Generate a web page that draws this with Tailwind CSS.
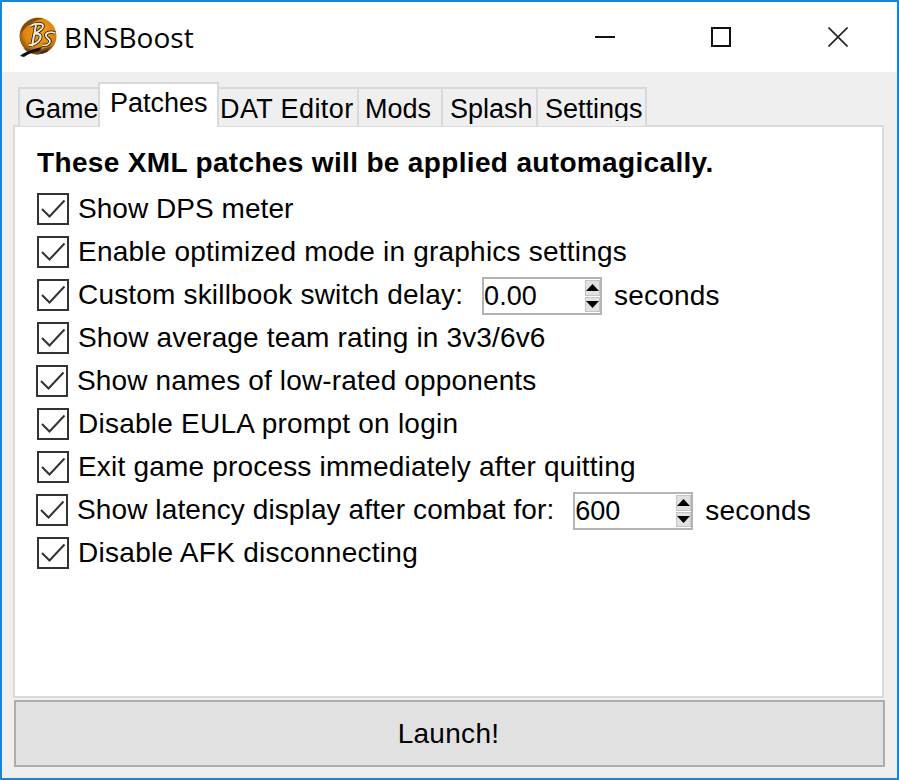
<!DOCTYPE html>
<html lang="en">
<head>
  <meta charset="UTF-8">
  <title>BNSBoost</title>
  <script src="https://cdn.jsdelivr.net/npm/@tailwindcss/browser@4"></script>
</head>
<body class="w-[899px] h-[780px] overflow-hidden bg-[#efefef]">
  <div class="w-[899px] h-[780px] border-2 border-[#1a84d9] flex flex-col font-['Liberation_Sans',Arial,sans-serif] text-[28px] text-black">

    <!-- title bar -->
    <div class="h-[70px] bg-white flex items-center shrink-0">
      <svg class="ml-[16px] w-[40px] h-[40px]" viewBox="0 0 40 40">
        <defs>
          <radialGradient id="disc" cx="0.55" cy="0.4" r="0.65">
            <stop offset="0" stop-color="#f4a21c"/>
            <stop offset="0.65" stop-color="#dd8410"/>
            <stop offset="1" stop-color="#6e420c"/>
          </radialGradient>
        </defs>
        <circle cx="20" cy="19" r="18.5" fill="url(#disc)"/>
        <path d="M2 18a18 18 0 0 1 24-16c-8 0-18 6-24 16z" fill="#5c3c14" opacity="0.75"/>
        <path d="M5 31c9 3 20 2 29-2a18 18 0 0 1-29 2z" fill="#6b4210" opacity="0.8"/>
        <path d="M12 9c5-3 13-3 13 0s-5 6-9 8c5-1 8 1 6 5s-7 6-11 6M18 8l-4 21" fill="none" stroke="#2a1a08" stroke-width="3.6"/>
        <path d="M37 16c-5-2-10 0-9 3s5 3 4 6-5 4-8 3" fill="none" stroke="#2a1a08" stroke-width="3.4"/>
        <path d="M12 9c5-3 13-3 13 0s-5 6-9 8c5-1 8 1 6 5s-7 6-11 6M18 8l-4 21" fill="none" stroke="#f2ead8" stroke-width="2"/>
        <path d="M37 16c-5-2-10 0-9 3s5 3 4 6-5 4-8 3" fill="none" stroke="#f2ead8" stroke-width="1.8"/>
        <path d="M2 39c4-4 13-7 22-9l-3 4c-6 1-11 3-15 6z" fill="#111"/>
        <path d="M22 35l9-3-2 3-6 2z" fill="#333"/>
      </svg>
      <span class="ml-[6px] font-['Open_Sans',sans-serif] text-[28px] leading-none">BNSBoost</span>
      <div class="ml-auto flex items-center">
        <svg class="w-[20px] h-[20px] mr-[96px]" viewBox="0 0 20 20"><path d="M0 10h20" stroke="#111" stroke-width="2"/></svg>
        <svg class="w-[20px] h-[20px] mr-[97px]" viewBox="0 0 20 20"><rect x="1" y="1" width="18" height="18" fill="none" stroke="#111" stroke-width="2"/></svg>
        <svg class="w-[20px] h-[20px] mr-[49px]" viewBox="0 0 20 20"><path d="M0.5 0.5l19 19M19.5 0.5l-19 19" stroke="#222" stroke-width="1.6"/></svg>
      </div>
    </div>

    <!-- tabs -->
    <div class="h-[53px] flex items-end pl-[16px] shrink-0 relative z-10 text-[27px] leading-none whitespace-nowrap">
      <div class="w-[80px] h-[39px] -mb-px border-2 border-r-0 border-b-0 border-[#d9d9d9] bg-[#efefef] pl-[5px] pt-[7px]">Game</div>
      <div class="w-[121px] h-[45px] -mb-[2px] border-2 border-b-0 border-[#d9d9d9] bg-white pl-[10px] pt-[6px]">Patches</div>
      <div class="w-[140px] h-[39px] -mb-px border-t-2 border-r-2 border-[#d9d9d9] bg-[#efefef] pl-[1px] pt-[7px] tracking-[0.4px]">DAT Editor</div>
      <div class="w-[84px] h-[39px] -mb-px border-t-2 border-r-2 border-[#d9d9d9] bg-[#efefef] pl-[6px] pt-[7px]">Mods</div>
      <div class="w-[95px] h-[39px] -mb-px border-t-2 border-r-2 border-[#d9d9d9] bg-[#efefef] pl-[7px] pt-[7px]">Splash</div>
      <div class="w-[109px] h-[39px] -mb-px border-t-2 border-r-2 border-[#d9d9d9] bg-[#efefef] pl-[7px] pt-[7px]"><div class="h-[25px] overflow-hidden">Settings</div></div>
    </div>

    <!-- patches pane -->
    <div class="mx-[11px] w-[871px] h-[573px] bg-white border-2 border-[#dadada] pl-[22px] pt-[20px] shrink-0">
      <h1 class="font-bold text-[28px] leading-[31px] tracking-[0.34px]">These XML patches will be applied automagically.</h1>
      <div class="mt-[9px] flex flex-col">
        <div class="flex items-center h-[43px] gap-[9px]">
          <svg class="w-[32px] h-[32px]" viewBox="0 0 32 32"><rect x="1" y="1" width="30" height="30" fill="#fff" stroke="#333" stroke-width="2"/><path d="M5 16l7.5 7.500L27.500 7.500" fill="none" stroke="#333" stroke-width="2"/></svg>
          <span class="tracking-[0.05px]">Show DPS meter</span>
        </div>
        <div class="flex items-center h-[43px] gap-[9px]">
          <svg class="w-[32px] h-[32px]" viewBox="0 0 32 32"><rect x="1" y="1" width="30" height="30" fill="#fff" stroke="#333" stroke-width="2"/><path d="M5 16l7.5 7.500L27.500 7.500" fill="none" stroke="#333" stroke-width="2"/></svg>
          <span class="tracking-[0.21px]">Enable optimized mode in graphics settings</span>
        </div>
        <div class="flex items-center h-[43px] gap-[9px]">
          <svg class="w-[32px] h-[32px]" viewBox="0 0 32 32"><rect x="1" y="1" width="30" height="30" fill="#fff" stroke="#333" stroke-width="2"/><path d="M5 16l7.5 7.500L27.500 7.500" fill="none" stroke="#333" stroke-width="2"/></svg>
          <span class="tracking-[0.18px]">Custom skillbook switch delay:</span>
          <div class="ml-[10px] w-[120px] h-[38px] mt-[3px] border-2 border-[#b4b4b4] flex items-center justify-between text-[27px]">
            <span>0.00</span>
            <div class="w-[15px] h-[32px] flex flex-col gap-px">
              <div class="flex-1 bg-[#e1e1e1] border border-[#c4c4c4] flex items-center justify-center"><svg class="w-[13px] h-[7px]" viewBox="0 0 13 7"><path d="M6.5 0l6.5 7H0z" fill="#000"/></svg></div>
              <div class="flex-1 bg-[#e1e1e1] border border-[#c4c4c4] flex items-center justify-center"><svg class="w-[13px] h-[7px]" viewBox="0 0 13 7"><path d="M0 0h13L6.500 7z" fill="#000"/></svg></div>
            </div>
          </div>
          <span class="ml-[3px] mt-[3px] tracking-[0.2px]">seconds</span>
        </div>
        <div class="flex items-center h-[43px] gap-[9px]">
          <svg class="w-[32px] h-[32px]" viewBox="0 0 32 32"><rect x="1" y="1" width="30" height="30" fill="#fff" stroke="#333" stroke-width="2"/><path d="M5 16l7.5 7.500L27.500 7.500" fill="none" stroke="#333" stroke-width="2"/></svg>
          <span class="tracking-[0.15px]">Show average team rating in 3v3/6v6</span>
        </div>
        <div class="flex items-center h-[43px] gap-[9px] -ml-px">
          <svg class="w-[32px] h-[32px]" viewBox="0 0 32 32"><rect x="1" y="1" width="30" height="30" fill="#fff" stroke="#333" stroke-width="2"/><path d="M5 16l7.5 7.500L27.500 7.500" fill="none" stroke="#333" stroke-width="2"/></svg>
          <span class="tracking-[0.15px]">Show names of low-rated opponents</span>
        </div>
        <div class="flex items-center h-[43px] gap-[9px]">
          <svg class="w-[32px] h-[32px]" viewBox="0 0 32 32"><rect x="1" y="1" width="30" height="30" fill="#fff" stroke="#333" stroke-width="2"/><path d="M5 16l7.5 7.500L27.500 7.500" fill="none" stroke="#333" stroke-width="2"/></svg>
          <span class="tracking-[0.24px]">Disable EULA prompt on login</span>
        </div>
        <div class="flex items-center h-[43px] gap-[9px]">
          <svg class="w-[32px] h-[32px]" viewBox="0 0 32 32"><rect x="1" y="1" width="30" height="30" fill="#fff" stroke="#333" stroke-width="2"/><path d="M5 16l7.5 7.500L27.500 7.500" fill="none" stroke="#333" stroke-width="2"/></svg>
          <span class="tracking-[0.19px]">Exit game process immediately after quitting</span>
        </div>
        <div class="flex items-center h-[43px] gap-[9px] -ml-px">
          <svg class="w-[32px] h-[32px]" viewBox="0 0 32 32"><rect x="1" y="1" width="30" height="30" fill="#fff" stroke="#333" stroke-width="2"/><path d="M5 16l7.5 7.500L27.500 7.500" fill="none" stroke="#333" stroke-width="2"/></svg>
          <span class="tracking-[0.11px]">Show latency display after combat for:</span>
          <div class="ml-[10px] w-[120px] h-[38px] mt-[3px] border-2 border-[#b4b4b4] flex items-center justify-between text-[27px]">
            <span>600</span>
            <div class="w-[15px] h-[32px] flex flex-col gap-px">
              <div class="flex-1 bg-[#e1e1e1] border border-[#c4c4c4] flex items-center justify-center"><svg class="w-[13px] h-[7px]" viewBox="0 0 13 7"><path d="M6.5 0l6.5 7H0z" fill="#000"/></svg></div>
              <div class="flex-1 bg-[#e1e1e1] border border-[#c4c4c4] flex items-center justify-center"><svg class="w-[13px] h-[7px]" viewBox="0 0 13 7"><path d="M0 0h13L6.500 7z" fill="#000"/></svg></div>
            </div>
          </div>
          <span class="ml-[3px] mt-[3px] tracking-[0.2px]">seconds</span>
        </div>
        <div class="flex items-center h-[43px] gap-[9px]">
          <svg class="w-[32px] h-[32px]" viewBox="0 0 32 32"><rect x="1" y="1" width="30" height="30" fill="#fff" stroke="#333" stroke-width="2"/><path d="M5 16l7.5 7.500L27.500 7.500" fill="none" stroke="#333" stroke-width="2"/></svg>
          <span class="tracking-[0.28px]">Disable AFK disconnecting</span>
        </div>
      </div>
    </div>

    <button class="mx-[12px] mt-[2px] w-[871px] h-[67px] bg-[#e1e1e1] border-2 border-[#adadad] pr-[2px] shrink-0 text-[28px] tracking-[0.3px] text-center">Launch!</button>
  </div>
</body>
</html>
